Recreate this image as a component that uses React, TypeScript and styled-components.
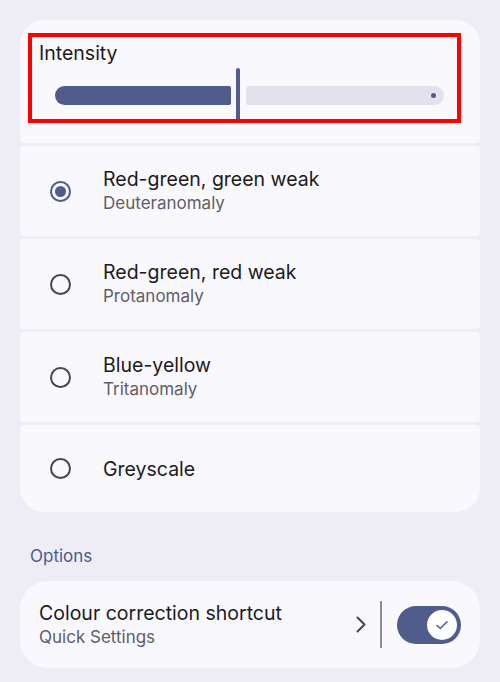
import styled, { createGlobalStyle } from "styled-components";
import { useState } from "react";

const Global = createGlobalStyle`
    body {
        margin: 0;
        background-color: #eeedf5;
        font-family: Inter, Roboto, "Noto Sans", sans-serif;
        color: #1b1b21;
    }
`

const Page = styled.div`
    width: 500px;
    height: 682px;
    box-sizing: border-box;
    padding: 20px 20px 0 20px;
    display: flex;
    flex-direction: column;
    overflow: hidden;
`

const List = styled.div`
    display: flex;
    flex-direction: column;
    gap: 3px;
`

const IntensityCard = styled.div`
    position: relative;
    height: 123px;
    box-sizing: border-box;
    background-color: #f9f8fd;
    border-radius: 24px 24px 4px 4px;
    padding: 21px 0 0 19px;
`

const Highlight = styled.div`
    position: absolute;
    left: 8px;
    top: 13px;
    width: 433px;
    height: 90px;
    box-sizing: border-box;
    border: 4px solid #ff0000;
    pointer-events: none;
`

const Label = styled.div`
    font-size: 19.5px;
    line-height: 24px;
`

const Slider = styled.div`
    margin: 3px 0 0 16px;
    width: 389px;
    height: 54px;
    display: flex;
    align-items: center;
`

const Track = styled.div<{ $active?: boolean; $w: number }>`
    width: ${p => p.$w}px;
    height: 19px;
    background-color: ${p => (p.$active ? "#505c8c" : "#e2e1ec")};
    border-radius: ${p => (p.$active ? "10px 2px 2px 10px" : "2px 10px 10px 2px")};
    position: relative;
`

const StopDot = styled.span`
    position: absolute;
    right: 8px;
    top: 7px;
    width: 5px;
    height: 5px;
    border-radius: 50%;
    background-color: #505c8c;
`

const Handle = styled.div`
    width: 4px;
    height: 54px;
    margin: 0 6px 0 5px;
    border-radius: 2px;
    background-color: #505c8c;
`

const Item = styled.div<{ $last?: boolean; $h: number }>`
    height: ${p => p.$h}px;
    box-sizing: border-box;
    background-color: #f9f8fd;
    border-radius: ${p => (p.$last ? "4px 4px 24px 24px" : "4px")};
    display: flex;
    align-items: center;
    padding-left: 30px;
    gap: 32px;
    cursor: pointer;
`

const Radio = styled.span<{ $on: boolean }>`
    width: 21px;
    height: 21px;
    box-sizing: border-box;
    border-radius: 50%;
    border: 2px solid ${p => (p.$on ? "#505c8c" : "#46464e")};
    display: flex;
    align-items: center;
    justify-content: center;
    flex-shrink: 0;
    &::after {
        content: "";
        width: 11px;
        height: 11px;
        border-radius: 50%;
        background-color: #505c8c;
        display: ${p => (p.$on ? "block" : "none")};
    }
`

const Texts = styled.div`
    display: flex;
    flex-direction: column;
`

const Title = styled.div`
    font-size: 19.5px;
    line-height: 24px;
    color: #1b1b21;
`

const Sub = styled.div`
    font-size: 17px;
    line-height: 24px;
    color: #5f5e67;
`

const Section = styled.div`
    margin: 32px 0 0 10px;
    font-size: 17px;
    line-height: 24px;
    color: #4b5992;
`

const ShortcutCard = styled.div`
    margin-top: 13px;
    height: 87px;
    box-sizing: border-box;
    background-color: #f9f8fd;
    border-radius: 28px;
    display: flex;
    align-items: center;
    padding: 0 19px;
`

const Grow = styled(Texts)`
    flex: 1;
`

const Divider = styled.div`
    width: 2px;
    height: 47px;
    background-color: #8a8a92;
    margin: 0 15px 0 14px;
`

const Switch = styled.div`
    width: 64px;
    height: 38px;
    border-radius: 19px;
    background-color: #505c8c;
    display: flex;
    align-items: center;
    justify-content: flex-end;
    padding-right: 4px;
    box-sizing: border-box;
`

const Thumb = styled.div`
    width: 30px;
    height: 30px;
    border-radius: 50%;
    background-color: #ffffff;
    display: flex;
    align-items: center;
    justify-content: center;
`

const options = [
    { title: "Red-green, green weak", sub: "Deuteranomaly" },
    { title: "Red-green, red weak", sub: "Protanomaly" },
    { title: "Blue-yellow", sub: "Tritanomaly" },
    { title: "Greyscale", sub: "" },
];

function App() {
    const [selected, setSelected] = useState(0);

    return (
        <>
            <Global />
            <Page>
                <List>
                    <IntensityCard>
                        <Label>Intensity</Label>
                        <Slider>
                            <Track $active $w={176} />
                            <Handle />
                            <Track $w={198}>
                                <StopDot />
                            </Track>
                        </Slider>
                        <Highlight />
                    </IntensityCard>
                    {options.map((o, i) => (
                        <Item
                            key={o.title}
                            $h={i === options.length - 1 ? 87 : 90}
                            $last={i === options.length - 1}
                            onClick={() => setSelected(i)}
                        >
                            <Radio $on={selected === i} />
                            <Texts>
                                <Title>{o.title}</Title>
                                {o.sub && <Sub>{o.sub}</Sub>}
                            </Texts>
                        </Item>
                    ))}
                </List>
                <Section>Options</Section>
                <ShortcutCard>
                    <Grow>
                        <Title>Colour correction shortcut</Title>
                        <Sub>Quick Settings</Sub>
                    </Grow>
                    <svg width="10" height="17" viewBox="0 0 10 17">
                        <path d="M1.5 1.5 8.5 8.5 1.5 15.5" fill="none" stroke="#45464f" strokeWidth="2" strokeLinecap="round" strokeLinejoin="round" />
                    </svg>
                    <Divider />
                    <Switch>
                        <Thumb>
                            <svg width="14" height="14" viewBox="0 0 14 14">
                                <path d="M2 7.5 5.3 10.5 12 3.8" fill="none" stroke="#505c8c" strokeWidth="1.6" strokeLinecap="round" strokeLinejoin="round" />
                            </svg>
                        </Thumb>
                    </Switch>
                </ShortcutCard>
            </Page>
        </>
    );
}

export default App;
